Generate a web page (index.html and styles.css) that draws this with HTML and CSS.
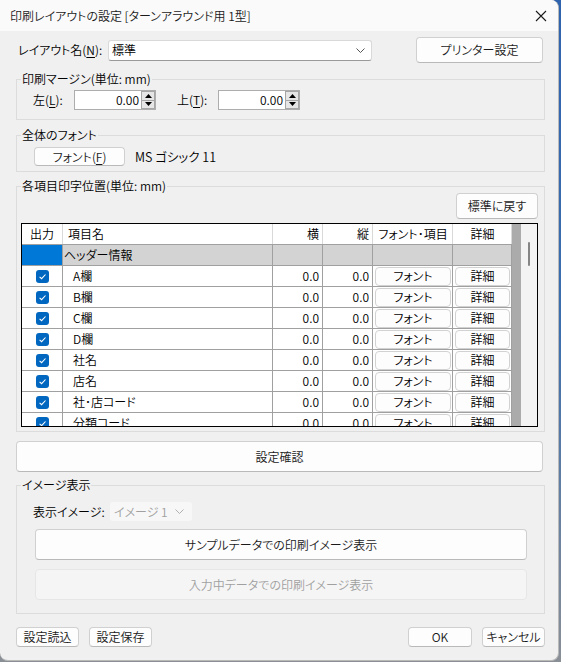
FILE: index.html
```html
<!DOCTYPE html>
<html lang="ja">
<head>
<meta charset="utf-8">
<title>印刷レイアウトの設定</title>
<link rel="stylesheet" href="styles.css">
</head>
<body>
<div class="window">
  <div class="titlebar">
    <span class="title">印刷レイアウトの設定 [ターンアラウンド用 1型]</span>
    <svg class="close" width="12" height="12" viewBox="0 0 12 12"><path d="M1 1L11 11M11 1L1 11" stroke="#1a1a1a" stroke-width="1.1" fill="none"/></svg>
  </div>
  <div class="content">
    <div class="layout-row">
      <span class="layout-label">レイアウト名(<u>N</u>):</span>
      <div class="combo">
        <span>標準</span>
        <svg class="chev" width="9" height="5" viewBox="0 0 9 5"><path d="M0.5 0.5L4.5 4.5L8.5 0.5" stroke="#555" stroke-width="1" fill="none"/></svg>
      </div>
      <button class="btn printer">プリンター設定</button>
    </div>

    <fieldset class="group g-margin">
      <legend>印刷マージン(単位: mm)</legend>
      <div class="margin-row">
        <span class="mlabel">左(<u>L</u>):</span>
        <div class="spin">
          <span class="spin-val">0.00</span>
          <div class="spin-btns">
            <span class="sb"><svg width="7" height="4" viewBox="0 0 7 4"><path d="M0 4L3.5 0L7 4Z" fill="#000"/></svg></span>
            <span class="sb"><svg width="7" height="4" viewBox="0 0 7 4"><path d="M0 0L3.5 4L7 0Z" fill="#000"/></svg></span>
          </div>
        </div>
        <span class="mlabel second">上(<u>T</u>):</span>
        <div class="spin">
          <span class="spin-val">0.00</span>
          <div class="spin-btns">
            <span class="sb"><svg width="7" height="4" viewBox="0 0 7 4"><path d="M0 4L3.5 0L7 4Z" fill="#000"/></svg></span>
            <span class="sb"><svg width="7" height="4" viewBox="0 0 7 4"><path d="M0 0L3.5 4L7 0Z" fill="#000"/></svg></span>
          </div>
        </div>
      </div>
    </fieldset>

    <fieldset class="group g-font">
      <legend>全体のフォント</legend>
      <div class="font-row">
        <button class="btn font-btn">フォント(<u>F</u>)</button>
        <span class="font-name">MS ゴシック 11</span>
      </div>
    </fieldset>

    <fieldset class="group g-items">
      <legend>各項目印字位置(単位: mm)</legend>
      <div class="items-body">
        <div class="items-top">
          <button class="btn reset">標準に戻す</button>
        </div>
        <div class="grid">
          <div class="table">
            <div class="tr head">
              <div class="td c-out center">出力</div>
              <div class="td c-name">項目名</div>
              <div class="td c-num">横</div>
              <div class="td c-num">縦</div>
              <div class="td c-fbtn center">フォント･項目</div>
              <div class="td c-dbtn center">詳細</div>
            </div>
            <div class="tr grp">
              <div class="td c-out sel"></div>
              <div class="td c-name flush">ヘッダー情報</div>
              <div class="td c-num"></div>
              <div class="td c-num"></div>
              <div class="td c-fbtn"></div>
              <div class="td c-dbtn"></div>
            </div>
            <div class="tr"><div class="td c-out center"><svg class="chk" width="13" height="13" viewBox="0 0 13 13"><rect width="13" height="13" rx="3" fill="#0067c0"/><path d="M3.6 6.8L5.6 8.7L9.5 4.5" stroke="#fff" stroke-width="1.1" fill="none"/></svg></div><div class="td c-name">A欄</div><div class="td c-num">0.0</div><div class="td c-num">0.0</div><div class="td c-fbtn"><span class="cbtn">フォント</span></div><div class="td c-dbtn"><span class="cbtn">詳細</span></div></div>
            <div class="tr"><div class="td c-out center"><svg class="chk" width="13" height="13" viewBox="0 0 13 13"><rect width="13" height="13" rx="3" fill="#0067c0"/><path d="M3.6 6.8L5.6 8.7L9.5 4.5" stroke="#fff" stroke-width="1.1" fill="none"/></svg></div><div class="td c-name">B欄</div><div class="td c-num">0.0</div><div class="td c-num">0.0</div><div class="td c-fbtn"><span class="cbtn">フォント</span></div><div class="td c-dbtn"><span class="cbtn">詳細</span></div></div>
            <div class="tr"><div class="td c-out center"><svg class="chk" width="13" height="13" viewBox="0 0 13 13"><rect width="13" height="13" rx="3" fill="#0067c0"/><path d="M3.6 6.8L5.6 8.7L9.5 4.5" stroke="#fff" stroke-width="1.1" fill="none"/></svg></div><div class="td c-name">C欄</div><div class="td c-num">0.0</div><div class="td c-num">0.0</div><div class="td c-fbtn"><span class="cbtn">フォント</span></div><div class="td c-dbtn"><span class="cbtn">詳細</span></div></div>
            <div class="tr"><div class="td c-out center"><svg class="chk" width="13" height="13" viewBox="0 0 13 13"><rect width="13" height="13" rx="3" fill="#0067c0"/><path d="M3.6 6.8L5.6 8.7L9.5 4.5" stroke="#fff" stroke-width="1.1" fill="none"/></svg></div><div class="td c-name">D欄</div><div class="td c-num">0.0</div><div class="td c-num">0.0</div><div class="td c-fbtn"><span class="cbtn">フォント</span></div><div class="td c-dbtn"><span class="cbtn">詳細</span></div></div>
            <div class="tr"><div class="td c-out center"><svg class="chk" width="13" height="13" viewBox="0 0 13 13"><rect width="13" height="13" rx="3" fill="#0067c0"/><path d="M3.6 6.8L5.6 8.7L9.5 4.5" stroke="#fff" stroke-width="1.1" fill="none"/></svg></div><div class="td c-name">社名</div><div class="td c-num">0.0</div><div class="td c-num">0.0</div><div class="td c-fbtn"><span class="cbtn">フォント</span></div><div class="td c-dbtn"><span class="cbtn">詳細</span></div></div>
            <div class="tr"><div class="td c-out center"><svg class="chk" width="13" height="13" viewBox="0 0 13 13"><rect width="13" height="13" rx="3" fill="#0067c0"/><path d="M3.6 6.8L5.6 8.7L9.5 4.5" stroke="#fff" stroke-width="1.1" fill="none"/></svg></div><div class="td c-name">店名</div><div class="td c-num">0.0</div><div class="td c-num">0.0</div><div class="td c-fbtn"><span class="cbtn">フォント</span></div><div class="td c-dbtn"><span class="cbtn">詳細</span></div></div>
            <div class="tr"><div class="td c-out center"><svg class="chk" width="13" height="13" viewBox="0 0 13 13"><rect width="13" height="13" rx="3" fill="#0067c0"/><path d="M3.6 6.8L5.6 8.7L9.5 4.5" stroke="#fff" stroke-width="1.1" fill="none"/></svg></div><div class="td c-name">社･店コード</div><div class="td c-num">0.0</div><div class="td c-num">0.0</div><div class="td c-fbtn"><span class="cbtn">フォント</span></div><div class="td c-dbtn"><span class="cbtn">詳細</span></div></div>
            <div class="tr"><div class="td c-out center"><svg class="chk" width="13" height="13" viewBox="0 0 13 13"><rect width="13" height="13" rx="3" fill="#0067c0"/><path d="M3.6 6.8L5.6 8.7L9.5 4.5" stroke="#fff" stroke-width="1.1" fill="none"/></svg></div><div class="td c-name">分類コード</div><div class="td c-num">0.0</div><div class="td c-num">0.0</div><div class="td c-fbtn"><span class="cbtn">フォント</span></div><div class="td c-dbtn"><span class="cbtn">詳細</span></div></div>
          </div>
          <div class="gutter"></div>
          <div class="vscroll"><span class="thumb"></span></div>
        </div>
      </div>
    </fieldset>

    <button class="btn confirm">設定確認</button>

    <fieldset class="group g-image">
      <legend>イメージ表示</legend>
      <div class="image-row">
        <span class="ilabel">表示イメージ:</span>
        <div class="combo disabled">
          <span>イメージ 1</span>
          <svg class="chev" width="9" height="5" viewBox="0 0 9 5"><path d="M0.5 0.5L4.5 4.5L8.5 0.5" stroke="#b0b0b0" stroke-width="1" fill="none"/></svg>
        </div>
      </div>
      <button class="btn wide">サンプルデータでの印刷イメージ表示</button>
      <button class="btn wide off">入力中データでの印刷イメージ表示</button>
    </fieldset>

    <div class="footer">
      <button class="btn fbtn">設定読込</button>
      <button class="btn fbtn">設定保存</button>
      <span class="spacer"></span>
      <button class="btn fbtn ok">OK</button>
      <button class="btn fbtn">キャンセル</button>
    </div>
  </div>
</div>
</body>
</html>
```
FILE: styles.css
```css
* { box-sizing: border-box; }
html, body { margin: 0; padding: 0; }
body {
  width: 561px;
  height: 662px;
  background: linear-gradient(180deg, #2f63ad 0%, #3d6fae 50%, #8a8f96 100%);
  font-family: "Noto Sans CJK JP", "Noto Sans", sans-serif;
  font-feature-settings: "palt";
  font-size: 12px;
  font-weight: 350;
  line-height: 16px;
  color: #000;
  overflow: hidden;
}
u { text-decoration: underline; text-underline-offset: 2px; }
.window {
  width: 559px;
  height: 661px;
  background: #f0f0f0;
  border: 1px solid #b9b9b9;
  border-top: none;
  border-left: none;
  border-radius: 0 8px 8px 8px;
  overflow: hidden;
  display: flex;
  flex-direction: column;
}
.titlebar {
  height: 31px;
  background: #fafafa;
  display: flex;
  align-items: center;
  padding: 0 8px 0 10px;
  flex: none;
}
.title { flex: 1; font-size: 12px; color: #1a1a1a; }
.close { margin-right: 3px; }
.content {
  padding: 0 13px 0 16px;
  display: flex;
  flex-direction: column;
}
.btn {
  font: inherit;
  font-feature-settings: "palt";
  color: #1a1a1a;
  background: #fdfdfd;
  border: 1px solid #d0d0d0;
  border-bottom-color: #b9b9b9;
  border-radius: 4px;
  padding: 0;
  margin: 0;
  display: flex;
  align-items: center;
  justify-content: center;
}
.layout-row {
  margin-top: 6px;
  height: 26px;
  display: flex;
  align-items: center;
}
.layout-label { width: 92px; padding-left: 2px; }
.combo {
  width: 264px;
  height: 21px;
  background: #fff;
  border: 1px solid #d9d9d9;
  border-bottom-color: #9a9a9a;
  border-radius: 3px;
  display: flex;
  align-items: center;
  padding: 0 6px 0 3px;
}
.combo span { flex: 1; }
.printer { margin-left: auto; margin-right: 2px; width: 127px; height: 26px; }

.group {
  margin: 0;
  padding: 0;
  border: 1px solid #dcdcdc;
  min-width: 0;
}
.group legend {
  margin-left: 4px;
  padding: 0 1px;
  line-height: 14px;
  height: 14px;
}
.g-margin { margin-top: 9px; padding: 4px 0 9px 0; }
.margin-row { display: flex; align-items: center; height: 20px; padding-left: 16px; }
.mlabel { width: 41px; }
.mlabel.second { margin-left: 21px; }
.spin {
  width: 82px;
  height: 20px;
  display: flex;
  background: #fff;
  border: 1px solid #adadad;
}
.spin-val { flex: 1; text-align: right; line-height: 18px; padding-right: 1px; }
.spin-btns { width: 15px; display: flex; flex-direction: column; border-left: 1px solid #fff; }
.sb {
  flex: 1;
  background: #e6e6e6;
  border: 1px solid #a6a6a6;
  display: flex;
  align-items: center;
  justify-content: center;
}
.sb + .sb { border-top: none; }

.g-font { margin-top: 8px; padding: 5px 0 5px 0; }
.font-row { display: flex; align-items: center; height: 19px; padding-left: 17px; }
.font-btn { width: 91px; height: 19px; }
.font-name { margin-left: 10px; font-size: 12.5px; }

.g-items { margin-top: 7px; padding: 0 0 4px 0; }
.items-body { padding: 0 6px 0 4px; }
.items-top { display: flex; justify-content: flex-end; }
.reset { width: 82px; height: 26px; }
.grid {
  margin-top: 4px;
  height: 204px;
  border: 1px solid #000;
  display: flex;
  overflow: hidden;
  background: #fff;
}
.table { width: 490px; flex: none; overflow: hidden; }
.tr {
  display: grid;
  grid-template-columns: 41px 210px 50px 50px 80px 59px;
  height: 21px;
  border-bottom: 1px solid #a0a0a0;
  background: #fff;
}
.td {
  border-right: 1px solid #a0a0a0;
  display: flex;
  align-items: center;
  padding: 0 4px;
  overflow: hidden;
  white-space: nowrap;
}
.head .td { border-right-color: #d9d9d9; }
.head .c-name { padding-left: 5px; }
.c-name { padding-left: 10px; }
.c-name.flush { padding-left: 1px; }
.c-num { justify-content: flex-end; padding-right: 3px; }
.center { justify-content: center; }
.grp .td { background: #d3d3d3; }
.grp .td.sel { background: #0078d7; }
.c-fbtn, .c-dbtn { padding: 0 1px 0 2px; justify-content: center; }
.c-fbtn .cbtn, .c-dbtn .cbtn {
  width: 100%;
  height: 19px;
  border: 1px solid #d2d2d2;
  border-radius: 4px;
  background: #fdfdfd;
  display: flex;
  align-items: center;
  justify-content: center;
}
.gutter { width: 9px; background: #ababab; flex: none; }
.vscroll { flex: 1; background: #f3f3f3; position: relative; }
.thumb {
  position: absolute;
  left: 7px;
  top: 18px;
  width: 2px;
  height: 24px;
  background: #858585;
  border-radius: 1px;
}

.confirm { margin-top: 9px; height: 31px; width: 527px; }

.g-image { margin-top: 6px; padding: 10px 0 13px 0; }
.image-row { display: flex; align-items: center; height: 19px; padding-left: 16px; }
.ilabel { width: 77px; }
.combo.disabled {
  width: 82px;
  height: 19px;
  background: #f7f7f7;
  border: none;
  color: #a0a0a0;
  padding: 0 8px 0 4px;
}
.wide { width: 492px; height: 31px; margin-left: 18px; }
.g-image .wide { margin-top: 8px; }
.g-image .wide.off { margin-top: 9px; }
.off { color: #a0a0a0; background: #f5f5f5; border-color: #e6e6e6; }

.footer { display: flex; margin-top: 13px; height: 20px; }
.fbtn { width: 63px; height: 20px; margin-right: 10px; }
.footer .fbtn:last-child { margin-right: 0; }
.ok { width: 64px; }
.spacer { flex: 1; }
```
